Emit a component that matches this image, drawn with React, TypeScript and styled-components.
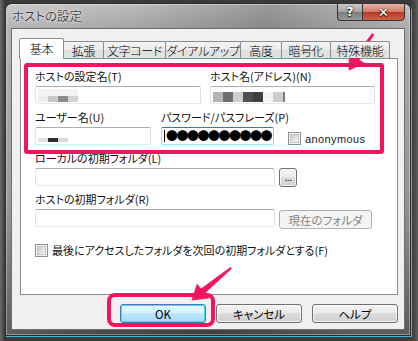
import React from "react";
import styled, { createGlobalStyle, css } from "styled-components";

const GlobalStyle = createGlobalStyle`
  html, body { margin: 0; padding: 0; }
  body {
    background: #3b3b3b;
    font-family: "Noto Sans CJK JP", "Noto Sans", sans-serif;
    font-feature-settings: "palt";
  }
`;

const JP = `"Noto Sans CJK JP", "Noto Sans", sans-serif`;

const Desktop = styled.div`
  position: relative;
  width: 418px;
  height: 341px;
  box-sizing: border-box;
  padding: 3px 7px 5px 5px;
  overflow: hidden;
  background:
    linear-gradient(90deg, #6b6b6b 0px, #3a3a3a 5px, #3a3a3a 411px, #5a5a5a 418px),
    #3b3b3b;
`;

const Window = styled.div`
  width: 406px;
  height: 333px;
  box-sizing: border-box;
  display: flex;
  flex-direction: column;
  border: 1px solid #2b2b2b;
  border-radius: 7px 7px 0 0;
  background:
    linear-gradient(100deg, rgba(255,255,255,0.18) 0px, rgba(255,255,255,0) 120px, rgba(0,0,0,0.18) 260px, rgba(255,255,255,0.08) 400px),
    linear-gradient(180deg, #bdbdbd 0px, #a4a4a4 26px, #8a8a8a 60%, #4d4d4d 100%);
  box-shadow:
    inset 0 0 0 1px rgba(255,255,255,0.35),
    1px 1px 0 #3fb6da;
`;

const TitleBar = styled.div`
  height: 24px;
  display: flex;
  align-items: flex-start;
  justify-content: space-between;
  padding-left: 6px;
`;

const Title = styled.div`
  font-family: ${JP};
  font-size: 12.5px;
  font-weight: 300;
  line-height: 24px;
  color: #101010;
  text-shadow: 0 0 6px rgba(255,255,255,0.9), 0 0 3px rgba(255,255,255,0.9);
`;

const CaptionButtons = styled.div`
  display: flex;
  margin-top: -1px;
  margin-right: 5px;
`;

const CaptionButton = styled.div<{ $kind: "help" | "close" }>`
  height: 18px;
  box-sizing: border-box;
  display: flex;
  align-items: center;
  justify-content: center;
  border: 1px solid #333;
  color: #fff;
  font-family: "DejaVu Sans", sans-serif;
  font-weight: bold;
  text-shadow: 0 0 2px #000, 0 1px 1px #222;
  ${(p) =>
    p.$kind === "help"
      ? css`
          width: 25px;
          font-size: 12px;
          border-radius: 0 0 0 4px;
          border-right: none;
          background: linear-gradient(180deg, #c9c9c9 0%, #a5a5a5 48%, #7d7d7d 52%, #9a9a9a 100%);
        `
      : css`
          width: 43px;
          font-size: 13px;
          border-radius: 0 0 4px 0;
          background: linear-gradient(180deg, #e7b3a6 0%, #d27a66 48%, #b83a22 52%, #d0624a 100%);
        `}
`;

const Client = styled.div`
  flex: 1;
  margin: 0 5px 5px 5px;
  border: 1px solid #6f6f6f;
  background: #f0f0f0;
  padding: 9px 0 0 7px;
  display: flex;
  flex-direction: column;
`;

const TabStrip = styled.div`
  display: flex;
  align-items: flex-end;
  height: 20px;
  position: relative;
  z-index: 1;
`;

const Tab = styled.div<{ $w: number; $active?: boolean }>`
  width: ${(p) => p.$w}px;
  box-sizing: border-box;
  display: flex;
  align-items: center;
  justify-content: center;
  font-family: ${JP};
  font-size: 12px;
  font-weight: 300;
  letter-spacing: -0.3px;
  white-space: nowrap;
  color: #000;
  border: 1px solid #898c95;
  border-bottom: none;
  border-radius: 2px 2px 0 0;
  ${(p) =>
    p.$active
      ? css`
          height: 21px;
          margin-bottom: -1px;
          background: #fff;
          padding-bottom: 1px;
        `
      : css`
          height: 17px;
          margin-left: -1px;
          background: linear-gradient(180deg, #f4f4f4 0%, #ebebeb 50%, #dedede 51%, #e3e3e3 100%);
        `}
`;

const Pane = styled.div`
  width: 378px;
  height: 237px;
  box-sizing: border-box;
  margin-left: 1px;
  border: 1px solid #898c95;
  background: #fff;
  padding: 10px 0 0 14px;
  display: flex;
  flex-direction: column;
`;

const Row = styled.div<{ $gap?: number }>`
  display: flex;
  align-items: flex-end;
  gap: ${(p) => p.$gap ?? 9}px;
  margin-bottom: 6px;
`;

const Field = styled.div<{ $w: number }>`
  width: ${(p) => p.$w}px;
  display: flex;
  flex-direction: column;
`;

const Label = styled.div`
  font-family: ${JP};
  font-size: 11px;
  font-weight: 400;
  line-height: 14px;
  height: 14px;
  color: #111;
  margin-bottom: 3px;
  white-space: nowrap;
`;

const Input = styled.div<{ $w?: number; $focus?: boolean }>`
  ${(p) => (p.$w ? `width: ${p.$w}px;` : "")}
  height: 18px;
  box-sizing: border-box;
  background: #fff;
  border: 1px solid;
  border-color: #abadb3 #dbdfe6 #e3e9ef #e2e3ea;
  border-radius: 2px;
  display: flex;
  align-items: center;
  padding-left: 2px;
  overflow: hidden;
  ${(p) =>
    p.$focus &&
    css`
      border-color: #3d7bad #a4c9e3 #b7d9ed #b5cfe7;
    `}
`;

const Mosaic = styled.div<{ $top?: number }>`
  display: flex;
  flex-direction: column;
  margin-top: ${(p) => p.$top ?? 0}px;
  align-self: flex-start;
`;

const MosaicLine = styled.div<{ $h: number }>`
  display: flex;
  height: ${(p) => p.$h}px;
`;

const Block = styled.div<{ $c: string; $w?: number }>`
  width: ${(p) => p.$w ?? 10}px;
  height: 100%;
  background: ${(p) => p.$c};
`;

const Dots = styled.span`
  font-family: ${JP};
  font-size: 12px;
  letter-spacing: -1.5px;
  line-height: 14px;
  color: #000;
  margin-left: 1px;
`;

const Caret = styled.span`
  width: 1px;
  height: 12px;
  background: #000;
`;

const CheckRow = styled.label<{ $ml?: number; $mt?: number }>`
  display: flex;
  align-items: center;
  gap: 4px;
  margin-left: ${(p) => p.$ml ?? 0}px;
  margin-top: ${(p) => p.$mt ?? 0}px;
  font-family: ${JP};
  font-size: 11px;
  font-weight: 400;
  color: #111;
  white-space: nowrap;
`;

const AnonText = styled.span`
  font-family: "Liberation Sans", Arial, sans-serif;
  font-size: 11px;
  font-weight: 400;
  letter-spacing: 0.4px;
  color: #222;
`;

const Box = styled.span`
  width: 13px;
  height: 13px;
  box-sizing: border-box;
  border: 1px solid #8f8f8f;
  background: #f4f4f4;
  display: flex;
  align-items: center;
  justify-content: center;
  &::after {
    content: "";
    width: 9px;
    height: 9px;
    box-sizing: border-box;
    border: 1px solid #c5c5c5;
    background: linear-gradient(135deg, #cbcbcb 0%, #f4f4f4 100%);
  }
`;

const PushButton = styled.div<{ $w: number; $variant?: "default" | "disabled"; $mt?: number; $mb?: number }>`
  width: ${(p) => p.$w}px;
  height: 19px;
  box-sizing: border-box;
  margin-top: ${(p) => p.$mt ?? 0}px;
  margin-bottom: ${(p) => p.$mb ?? 0}px;
  display: flex;
  align-items: center;
  justify-content: center;
  font-family: ${JP};
  font-size: 11.5px;
  font-weight: 400;
  color: #000;
  border: 1px solid #707070;
  border-radius: 3px;
  background: linear-gradient(180deg, #f2f2f2 0%, #ebebeb 49%, #dddddd 50%, #cfcfcf 100%);
  box-shadow: inset 0 0 0 1px rgba(255,255,255,0.75);
  ${(p) =>
    p.$variant === "default" &&
    css`
      border-color: #3c7fb1;
      background: linear-gradient(180deg, #eaf6fd 0%, #d9f0fc 49%, #bee6fd 50%, #a7d9f5 100%);
      box-shadow: inset 0 0 0 1px #48d8fb;
    `}
  ${(p) =>
    p.$variant === "disabled" &&
    css`
      border-color: #adb2b5;
      background: #f4f4f4;
      color: #838383;
      box-shadow: none;
    `}
`;

const SmallButtonText = styled.span`
  font-family: "Liberation Sans", Arial, sans-serif;
  font-size: 10px;
  line-height: 10px;
  letter-spacing: -0.5px;
  color: #000;
`;

const ButtonRow = styled.div`
  display: flex;
  justify-content: flex-end;
  gap: 10px;
  width: 379px;
  margin-top: 9px;
`;

const Highlight = styled.div<{ $x: number; $y: number; $w: number; $h: number; $r: number }>`
  position: absolute;
  left: ${(p) => p.$x}px;
  top: ${(p) => p.$y}px;
  width: ${(p) => p.$w}px;
  height: ${(p) => p.$h}px;
  box-sizing: border-box;
  border: 4px solid #f2145c;
  border-radius: ${(p) => p.$r}px;
  pointer-events: none;
`;

const ArrowLayer = styled.svg`
  position: absolute;
  left: 0;
  top: 0;
  pointer-events: none;
`;

function Arrow({ x1, y1, x2, y2 }: { x1: number; y1: number; x2: number; y2: number }) {
  const dx = x2 - x1;
  const dy = y2 - y1;
  const len = Math.hypot(dx, dy);
  const ux = dx / len;
  const uy = dy / len;
  const nx = -uy;
  const ny = ux;
  const headLen = 14;
  const headW = 9;
  const bx = x2 - ux * headLen;
  const by = y2 - uy * headLen;
  const pts = [
    [x1 + nx * 0.8, y1 + ny * 0.8],
    [bx + nx * 2.8, by + ny * 2.8],
    [bx + nx * headW, by + ny * headW],
    [x2, y2],
    [bx - nx * headW, by - ny * headW],
    [bx - nx * 2.8, by - ny * 2.8],
    [x1 - nx * 0.8, y1 - ny * 0.8],
  ]
    .map((p) => p.map((v) => v.toFixed(1)).join(","))
    .join(" ");
  return <polygon points={pts} fill="#f2145c" stroke="#f2145c" strokeWidth="0.8" strokeLinejoin="round" />;
}

export default function App() {
  return (
    <>
      <GlobalStyle />
      <Desktop>
        <Window>
          <TitleBar>
            <Title>ホストの設定</Title>
            <CaptionButtons>
              <CaptionButton $kind="help">?</CaptionButton>
              <CaptionButton $kind="close">✕</CaptionButton>
            </CaptionButtons>
          </TitleBar>
          <Client>
            <TabStrip>
              <Tab $w={45} $active>基本</Tab>
              <Tab $w={41}>拡張</Tab>
              <Tab $w={63}>文字コード</Tab>
              <Tab $w={76}>ダイアルアップ</Tab>
              <Tab $w={42}>高度</Tab>
              <Tab $w={50}>暗号化</Tab>
              <Tab $w={60}>特殊機能</Tab>
            </TabStrip>
            <Pane>
              <Row>
                <Field $w={166}>
                  <Label>ホストの設定名(T)</Label>
                  <Input>
                    <Mosaic $top={2}>
                      <MosaicLine $h={7}>
                        <Block $c="#f3f3f3" $w={40} />
                      </MosaicLine>
                      <MosaicLine $h={6}>
                        <Block $c="#ececec" />
                        <Block $c="#c9c9c9" />
                        <Block $c="#8b8b8b" />
                        <Block $c="#d2d2d2" />
                      </MosaicLine>
                    </Mosaic>
                  </Input>
                </Field>
                <Field $w={165}>
                  <Label>ホスト名(アドレス)(N)</Label>
                  <Input>
                    <Mosaic $top={5}>
                      <MosaicLine $h={10}>
                        <Block $c="#b4b4b4" />
                        <Block $c="#6e6e6e" />
                        <Block $c="#cfcfcf" />
                        <Block $c="#4f4f4f" />
                        <Block $c="#3f3f3f" />
                        <Block $c="#f4f4f4" />
                        <Block $c="#cdcdcd" />
                        <Block $c="#7c7c7c" $w={2} />
                      </MosaicLine>
                    </Mosaic>
                  </Input>
                </Field>
              </Row>
              <Row $gap={10}>
                <Field $w={116}>
                  <Label>ユーザー名(U)</Label>
                  <Input>
                    <Mosaic $top={10}>
                      <MosaicLine $h={4}>
                        <Block $c="#e2e2e2" />
                        <Block $c="#2e2e2e" />
                        <Block $c="#d8d8d8" />
                      </MosaicLine>
                    </Mosaic>
                  </Input>
                </Field>
                <Field $w={113}>
                  <Label>パスワード/パスフレーズ(P)</Label>
                  <Input $focus>
                    <Caret />
                    <Dots>●●●●●●●●●●</Dots>
                  </Input>
                </Field>
                <CheckRow $ml={4}>
                  <Box />
                  <AnonText>anonymous</AnonText>
                </CheckRow>
              </Row>
              <Row $gap={4}>
                <Field $w={240}>
                  <Label>ローカルの初期フォルダ(L)</Label>
                  <Input />
                </Field>
                <PushButton $w={18} $mt={1} $mb={-1}>
                  <SmallButtonText>...</SmallButtonText>
                </PushButton>
              </Row>
              <Row $gap={4}>
                <Field $w={240}>
                  <Label>ホストの初期フォルダ(R)</Label>
                  <Input />
                </Field>
                <PushButton $w={93} $variant="disabled" $mb={-2}>
                  現在のフォルダ
                </PushButton>
              </Row>
              <CheckRow $mt={9}>
                <Box />
                最後にアクセスしたフォルダを次回の初期フォルダとする(F)
              </CheckRow>
            </Pane>
            <ButtonRow>
              <PushButton $w={86} $variant="default">OK</PushButton>
              <PushButton $w={86}>キャンセル</PushButton>
              <PushButton $w={86}>ヘルプ</PushButton>
            </ButtonRow>
          </Client>
        </Window>
        <Highlight $x={24} $y={63} $w={360} $h={91} $r={3} />
        <Highlight $x={107} $y={293} $w={108} $h={34} $r={8} />
        <ArrowLayer width={418} height={341} viewBox="0 0 418 341">
          <Arrow x1={373} x2={349} y1={34} y2={70} />
          <Arrow x1={231} x2={192} y1={268} y2={300} />
        </ArrowLayer>
      </Desktop>
    </>
  );
}
